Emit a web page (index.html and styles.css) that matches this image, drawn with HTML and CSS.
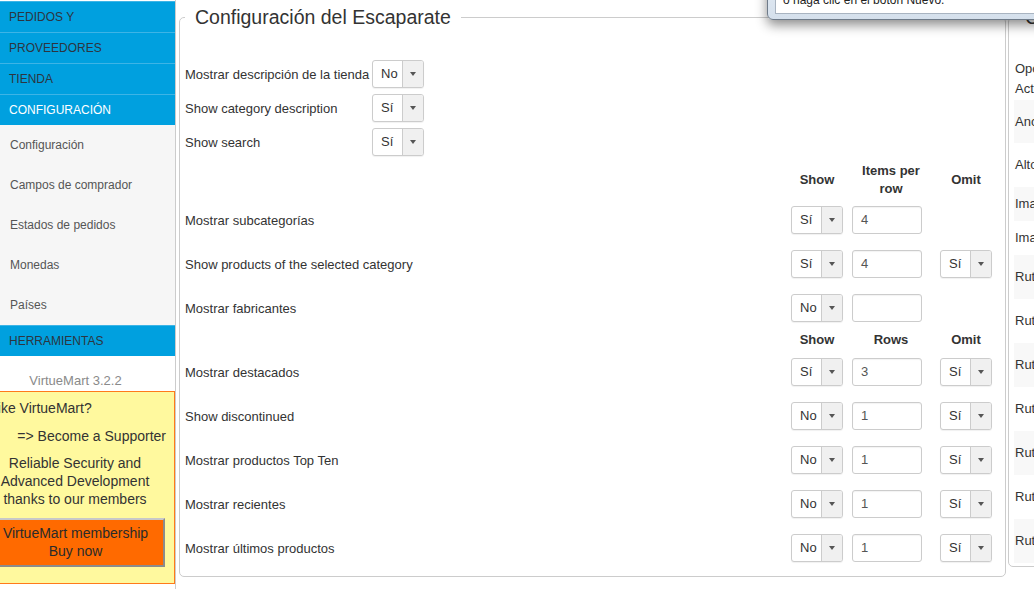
FILE: index.html
```html
<!DOCTYPE html>
<html lang="es">
<head>
<meta charset="utf-8">
<title>Configuración del Escaparate</title>
<link rel="stylesheet" href="styles.css">
</head>
<body>
<div class="page">
  <aside class="sidebar">
    <div class="menu-item">PEDIDOS Y</div>
    <div class="menu-item">PROVEEDORES</div>
    <div class="menu-item">TIENDA</div>
    <div class="menu-item active">CONFIGURACIÓN</div>
    <ul class="submenu">
      <li>Configuración</li>
      <li>Campos de comprador</li>
      <li>Estados de pedidos</li>
      <li>Monedas</li>
      <li>Países</li>
    </ul>
    <div class="menu-item">HERRAMIENTAS</div>
    <div class="version">VirtueMart 3.2.2</div>
    <div class="promo">
      <p class="promo-q">Like VirtueMart?</p>
      <p class="promo-link">=&gt; Become a Supporter</p>
      <p class="promo-text">Reliable Security and Advanced Development thanks to our members</p>
      <div class="promo-btn">VirtueMart membership<br>Buy now</div>
    </div>
  </aside>

  <main class="main">
    <fieldset class="panel panel-main">
      <legend>Configuración del Escaparate</legend>
      <div class="panel-body">
        <div class="simple-row">
          <span class="lbl">Mostrar descripción de la tienda</span>
          <div class="sel"><span class="val">No</span><span class="arr"><i></i></span></div>
        </div>
        <div class="simple-row">
          <span class="lbl">Show category description</span>
          <div class="sel"><span class="val">Sí</span><span class="arr"><i></i></span></div>
        </div>
        <div class="simple-row">
          <span class="lbl">Show search</span>
          <div class="sel"><span class="val">Sí</span><span class="arr"><i></i></span></div>
        </div>

        <div class="grid">
          <div class="head h-tall"></div>
          <div class="head h-tall">Show</div>
          <div class="head h-tall">Items per row</div>
          <div class="head h-tall omit-head">Omit</div>

          <div class="cell lbl">Mostrar subcategorías</div>
          <div class="cell"><div class="sel"><span class="val">Sí</span><span class="arr"><i></i></span></div></div>
          <div class="cell"><div class="inp">4</div></div>
          <div class="cell omit"></div>

          <div class="cell lbl">Show products of the selected category</div>
          <div class="cell"><div class="sel"><span class="val">Sí</span><span class="arr"><i></i></span></div></div>
          <div class="cell"><div class="inp">4</div></div>
          <div class="cell omit"><div class="sel"><span class="val">Sí</span><span class="arr"><i></i></span></div></div>

          <div class="cell lbl">Mostrar fabricantes</div>
          <div class="cell"><div class="sel"><span class="val">No</span><span class="arr"><i></i></span></div></div>
          <div class="cell"><div class="inp"></div></div>
          <div class="cell omit"></div>

          <div class="head h-short"></div>
          <div class="head h-short">Show</div>
          <div class="head h-short">Rows</div>
          <div class="head h-short omit-head">Omit</div>

          <div class="cell lbl">Mostrar destacados</div>
          <div class="cell"><div class="sel"><span class="val">Sí</span><span class="arr"><i></i></span></div></div>
          <div class="cell"><div class="inp">3</div></div>
          <div class="cell omit"><div class="sel"><span class="val">Sí</span><span class="arr"><i></i></span></div></div>

          <div class="cell lbl">Show discontinued</div>
          <div class="cell"><div class="sel"><span class="val">No</span><span class="arr"><i></i></span></div></div>
          <div class="cell"><div class="inp">1</div></div>
          <div class="cell omit"><div class="sel"><span class="val">Sí</span><span class="arr"><i></i></span></div></div>

          <div class="cell lbl">Mostrar productos Top Ten</div>
          <div class="cell"><div class="sel"><span class="val">No</span><span class="arr"><i></i></span></div></div>
          <div class="cell"><div class="inp">1</div></div>
          <div class="cell omit"><div class="sel"><span class="val">Sí</span><span class="arr"><i></i></span></div></div>

          <div class="cell lbl">Mostrar recientes</div>
          <div class="cell"><div class="sel"><span class="val">No</span><span class="arr"><i></i></span></div></div>
          <div class="cell"><div class="inp">1</div></div>
          <div class="cell omit"><div class="sel"><span class="val">Sí</span><span class="arr"><i></i></span></div></div>

          <div class="cell lbl">Mostrar últimos productos</div>
          <div class="cell"><div class="sel"><span class="val">No</span><span class="arr"><i></i></span></div></div>
          <div class="cell"><div class="inp">1</div></div>
          <div class="cell omit"><div class="sel"><span class="val">Sí</span><span class="arr"><i></i></span></div></div>
        </div>
      </div>
    </fieldset>

    <fieldset class="panel panel-side">
      <legend>Configuración de imágenes</legend>
      <div class="side-body">
        <div class="srow s-first">Opciones<br>Activas</div>
        <div class="srow s-anc odd">Ancho de la imagen</div>
        <div class="srow s-44">Alto de la imagen</div>
        <div class="srow s-34 odd">Imagen por defecto</div>
        <div class="srow s-34">Imagen no disponible</div>
        <div class="srow s-44 odd">Ruta de imágenes</div>
        <div class="srow s-44">Ruta de miniaturas</div>
        <div class="srow s-44 odd">Ruta de fabricantes</div>
        <div class="srow s-44">Ruta de categorías</div>
        <div class="srow s-44 odd">Ruta de vendedores</div>
        <div class="srow s-44">Ruta de productos</div>
        <div class="srow s-44 odd">Ruta de documentos</div>
      </div>
    </fieldset>
  </main>
</div>

<div class="popup">
  <div class="popup-inner"><span class="popup-text">o haga clic en el botón Nuevo.</span></div>
</div>
</body>
</html>
```

FILE: styles.css
```css
* { box-sizing: border-box; }

html, body {
  margin: 0;
  padding: 0;
}

body {
  width: 1034px;
  height: 589px;
  overflow: hidden;
  background: #fff;
  font-family: "Liberation Sans", Arial, sans-serif;
  font-size: 13px;
  color: #333;
  position: relative;
}

.page {
  display: flex;
  height: 589px;
}

/* ---------- sidebar ---------- */
.sidebar {
  width: 176px;
  flex: none;
  border-right: 1px solid #ccc;
  overflow: hidden;
  background: #fff;
  padding-top: 1px;
}

.menu-item {
  height: 31px;
  line-height: 30px;
  border-top: 1px solid #3db4e6;
  background: #00a0df;
  color: #2d3540;
  font-size: 12px;
  padding-left: 9px;
  text-transform: uppercase;
}

.menu-item.active {
  color: #fff;
}

.submenu {
  list-style: none;
  margin: 0;
  padding: 0;
  background: #f6f6f6;
}

.submenu li {
  height: 40px;
  line-height: 40px;
  padding-left: 10px;
  font-size: 12px;
  color: #555;
}

.version {
  padding-top: 17px;
  padding-right: 24px;
  line-height: 16px;
  height: 33px;
  text-align: center;
  color: #8a8a8a;
  font-size: 13px;
}

.promo {
  margin-top: 2px;
  margin-left: -25px;
  width: 200px;
  background: #fff99e;
  border: 1px solid #ff7a1a;
  padding: 7px 0 16px;
  font-size: 14px;
  line-height: 18px;
  color: #333;
}

.promo p {
  margin: 0;
}

.promo-q {
  padding-left: 14px;
}

.promo-link {
  margin-top: 10px !important;
  text-align: right;
  padding-right: 8px;
}

.promo-text {
  margin-top: 9px !important;
  text-align: center;
  padding: 0 20px;
}

.promo-btn {
  margin: 10px 9px 0 10px;
  background: #ff6a00;
  border: 2px solid;
  border-color: #c8c8c8 #8c8c8c #8c8c8c #c8c8c8;
  text-align: center;
  padding: 4px 0 5px;
  color: #2a2a2a;
}

/* ---------- main ---------- */
.main {
  flex: 1;
  display: flex;
  gap: 2px;
  padding-left: 3px;
  padding-top: 7px;
  align-items: flex-start;
  min-width: 0;
}

.panel {
  margin: 0;
  border: 1px solid #ccc;
  border-radius: 5px;
  padding: 0 5px 6px;
  min-width: 0;
}

.panel legend {
  font-size: 19.5px;
  line-height: 20px;
  padding: 0 10px;
  color: #333;
  white-space: nowrap;
}

.panel-main {
  width: 827px;
  flex: none;
}

.panel-body {
  padding-top: 30px;
}

.simple-row {
  display: flex;
  align-items: center;
  height: 34px;
}

.simple-row .lbl {
  width: 187px;
  flex: none;
  white-space: nowrap;
}

.lbl {
  color: #333;
}

.grid {
  margin-top: 3px;
  margin-right: 8px;
  display: grid;
  grid-template-columns: 1fr 52px 78px 53px;
  column-gap: 9px;
}

.head {
  font-weight: bold;
  text-align: center;
  line-height: 18px;
  display: flex;
  align-items: center;
  justify-content: center;
}

.omit-head {
  padding-left: 1px;
}

.h-tall { height: 36px; }
.h-short { height: 20px; }

.cell {
  height: 44px;
  display: flex;
  align-items: center;
}

.cell.omit {
  justify-content: flex-end;
}

.cell.lbl {
  white-space: nowrap;
}

/* select widget */
.sel {
  width: 52px;
  height: 28px;
  border: 1px solid #ccc;
  border-radius: 3px;
  display: flex;
  background: #fff;
  box-shadow: 0 1px 1px rgba(0, 0, 0, 0.06);
  overflow: hidden;
}

.sel .val {
  flex: 1;
  padding-left: 8px;
  line-height: 26px;
  color: #333;
}

.sel .arr {
  width: 21px;
  flex: none;
  border-left: 1px solid #ccc;
  background: #f0f0f0;
  display: flex;
  align-items: center;
  justify-content: center;
}

.sel .arr i {
  width: 0;
  height: 0;
  border-top: 4px solid #555;
  border-left: 3.5px solid transparent;
  border-right: 3.5px solid transparent;
}

.inp {
  width: 70px;
  height: 28px;
  border: 1px solid #ccc;
  border-radius: 3px;
  padding-left: 8px;
  line-height: 26px;
  color: #555;
  box-shadow: inset 0 1px 1px rgba(0, 0, 0, 0.05);
}

/* side panel */
.panel-side {
  width: 200px;
  flex: none;
  padding: 0 0 3px 5px;
}

.panel-side legend {
  padding: 0 0 0 11px;
}

.side-body {
  padding-top: 30px;
}

.srow {
  white-space: nowrap;
  padding-left: 1px;
  display: flex;
  align-items: center;
  line-height: 20px;
}

.srow.odd {
  background: #f8f8f8;
}

.s-first { height: 43px; }
.s-anc { height: 43px; }
.s-44 { height: 44px; }
.s-34 { height: 34px; }

/* popup window overlapping the page */
.popup {
  position: absolute;
  left: 767px;
  top: -30px;
  width: 300px;
  height: 50px;
  background: linear-gradient(#e6edf5, #d5e0ec);
  border: 1px solid #6f7b89;
  border-radius: 0 0 0 6px;
  box-shadow: 0 5px 12px rgba(0, 0, 0, 0.45);
}

.popup-inner {
  position: absolute;
  left: 7px;
  right: 0;
  top: 0;
  bottom: 5px;
  background: #fff;
  border: 1px solid #a9b4c1;
  border-top: none;
  overflow: hidden;
}

.popup-text {
  position: absolute;
  left: 7px;
  top: 22px;
  font-size: 12px;
  line-height: 14px;
  color: #222;
  white-space: nowrap;
}
```
